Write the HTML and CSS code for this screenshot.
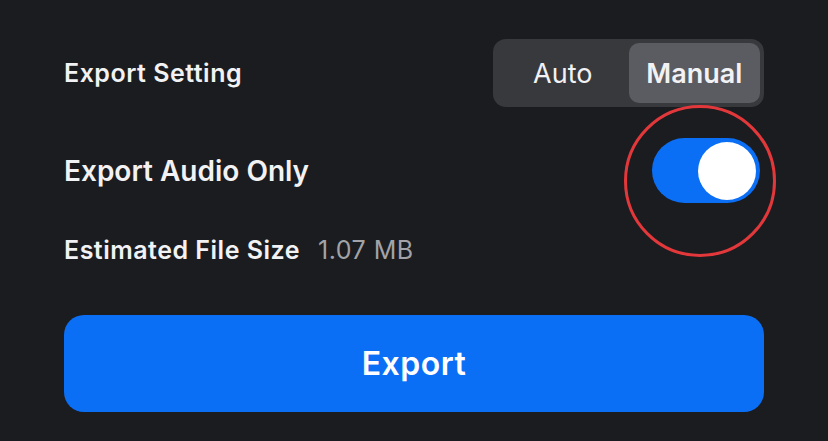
FILE: index.html
```html
<!DOCTYPE html>
<html lang="en">

<head>
    <meta charset="UTF-8">
    <meta name="viewport" content="width=device-width, initial-scale=1.0">
    <title>Export</title>
    <link rel="stylesheet" href="styles.css">
</head>

<body>
    <div class="panel">
        <div class="row setting-row">
            <span class="label">Export Setting</span>
            <div class="segmented">
                <button class="segment">Auto</button>
                <button class="segment active">Manual</button>
            </div>
        </div>

        <div class="row audio-row">
            <span class="label big">Export Audio Only</span>
            <div class="toggle-wrap">
                <div class="toggle on">
                    <span class="knob"></span>
                </div>
                <span class="highlight"></span>
            </div>
        </div>

        <div class="row size-row">
            <span class="label">Estimated File Size</span>
            <span class="size-value">1.07 MB</span>
        </div>

        <button class="export-btn">Export</button>
    </div>
</body>

</html>
```

FILE: styles.css
```css
body {
    margin: 0;
    padding: 0;
    background-color: #1b1c1f;
    font-family: Inter, "Open Sans", sans-serif;
    color: #f2f2f4;
}

.panel {
    width: 700px;
    padding: 39px 64px 0 64px;
    display: flex;
    flex-direction: column;
}

.row {
    display: flex;
    align-items: center;
}

.label {
    font-size: 25px;
    font-weight: 600;
    letter-spacing: 0.5px;
}

.label.big {
    font-size: 28px;
    letter-spacing: 0;
}

.setting-row {
    justify-content: space-between;
    height: 68px;
}

.segmented {
    display: flex;
    width: 263px;
    height: 60px;
    padding: 4px;
    background-color: #38393d;
    border-radius: 13px;
}

.segment {
    flex: 1;
    border: none;
    background: none;
    color: #f2f2f4;
    font-family: inherit;
    font-size: 27px;
    font-weight: 400;
    border-radius: 10px;
    padding: 0;
}

.segment.active {
    background-color: #5b5c61;
    font-weight: 600;
}

.audio-row {
    justify-content: space-between;
    height: 65px;
    margin-top: 31px;
}

.toggle-wrap {
    position: relative;
    margin-right: 4px;
}

.toggle {
    width: 108px;
    height: 65px;
    border-radius: 33px;
    background-color: #0b6ff6;
    display: flex;
    align-items: center;
    justify-content: flex-end;
    padding: 0 4px;
    box-sizing: border-box;
}

.knob {
    width: 58px;
    height: 58px;
    border-radius: 50%;
    background-color: #ffffff;
}

/* red annotation ring around the switch */
.highlight {
    position: absolute;
    left: -28px;
    top: -33px;
    width: 146px;
    height: 146px;
    border: 3px solid #e3383b;
    border-radius: 50%;
}

.size-row {
    height: 30px;
    margin-top: 32px;
    gap: 18px;
}

.size-value {
    font-size: 25px;
    letter-spacing: 0.5px;
    color: #a2a3a8;
}

.export-btn {
    margin-top: 50px;
    height: 97px;
    border: none;
    border-radius: 20px;
    background-color: #0b6ff6;
    color: #ffffff;
    font-family: inherit;
    font-size: 32px;
    font-weight: 600;
    letter-spacing: 0.5px;
}
```
